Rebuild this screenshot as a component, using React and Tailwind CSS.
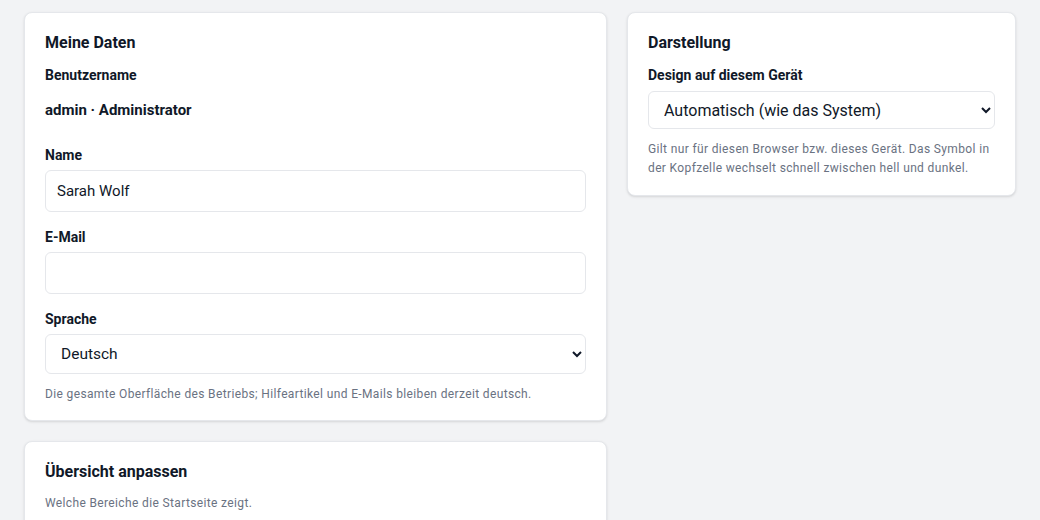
import React from 'react';

const Card = ({ children, className = '' }) => (
    <section className={`bg-white border border-gray-200 rounded-lg shadow-sm px-5 pt-[18px] ${className}`}>
        {children}
    </section>
);

const Label = ({ children, className = '' }) => (
    <label className={`block text-[14px] leading-5 font-bold text-gray-900 ${className}`}>{children}</label>
);

const Help = ({ children, className = '' }) => (
    <p className={`text-[12px] tracking-[0.03em] text-gray-500 ${className}`}>{children}</p>
);

export default function App() {
    return (
        <div
            className="min-h-screen bg-[#f2f3f5] px-6 pt-3 text-gray-900"
            style={{ fontFamily: 'Roboto, "Liberation Sans", sans-serif' }}
        >
            <div className="grid grid-cols-[583px_389px] gap-[20px] items-start">
                {/* Left column */}
                <div className="flex flex-col gap-[20px]">
                    <Card className="pb-[16px]">
                        <h2 className="text-[16px] font-bold leading-6 mb-[10px]">Meine Daten</h2>
                        <Label>Benutzername</Label>
                        <p className="text-[15px] font-bold leading-5 mt-[15px] mb-[25px]">admin · Administrator</p>

                        <Label className="mb-[5px]">Name</Label>
                        <input
                            type="text"
                            defaultValue="Sarah Wolf"
                            className="block w-full h-[42px] px-[11px] border border-gray-200 rounded-md text-[15px] mb-[15px]"
                        />

                        <Label className="mb-[5px]">E-Mail</Label>
                        <input
                            type="email"
                            className="block w-full h-[42px] px-[11px] border border-gray-200 rounded-md text-[15px] mb-[15px]"
                        />

                        <Label className="mb-[5px]">Sprache</Label>
                        <select className="block w-full h-[40px] px-[11px] border border-gray-200 rounded-md text-[15.5px] bg-white">
                            <option>Deutsch</option>
                        </select>
                        <Help className="leading-5 mt-[10px]">
                            Die gesamte Oberfläche des Betriebs; Hilfeartikel und E-Mails bleiben derzeit deutsch.
                        </Help>
                    </Card>

                    <Card className="pb-[17px]">
                        <h2 className="text-[16px] font-bold leading-6">Übersicht anpassen</h2>
                        <Help className="leading-5 mt-[9px]">Welche Bereiche die Startseite zeigt.</Help>
                        <div className="h-10" />
                    </Card>
                </div>

                {/* Right column */}
                <Card className="pb-[17px]">
                    <h2 className="text-[16px] font-bold leading-6 mb-[10px]">Darstellung</h2>
                    <Label className="mb-[6px]">Design auf diesem Gerät</Label>
                    <select className="block w-full h-[38px] px-[11px] border border-gray-200 rounded-md text-[16px] bg-white">
                        <option>Automatisch (wie das System)</option>
                        <option>Hell</option>
                        <option>Dunkel</option>
                    </select>
                    <Help className="leading-[19px] mt-[11px]">
                        Gilt nur für diesen Browser bzw. dieses Gerät. Das Symbol in der Kopfzelle wechselt schnell zwischen hell und dunkel.
                    </Help>
                </Card>
            </div>
        </div>
    );
}
